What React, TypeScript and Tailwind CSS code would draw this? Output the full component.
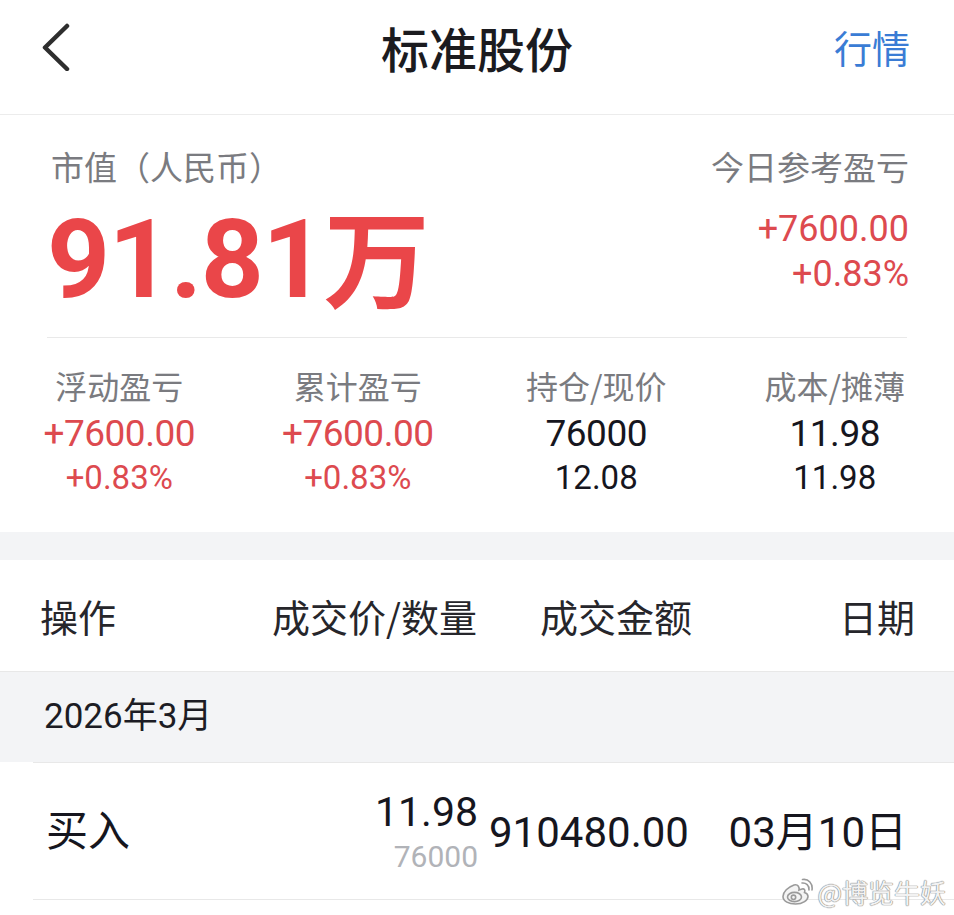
import React from "react";

const NUM = "font-['Roboto','Noto_Sans_CJK_SC',sans-serif]";
const CJK = "font-['Noto_Sans_CJK_SC',sans-serif]";

function Chevron() {
  return (
    <svg width="30" height="48" viewBox="0 0 30 48" className="block">
      <polyline
        points="25,3 3,24.5 25,46"
        fill="none"
        stroke="#2e2e2e"
        strokeWidth="4.5"
        strokeLinecap="round"
        strokeLinejoin="round"
      />
    </svg>
  );
}

function WeiboLogo() {
  return (
    <svg width="32" height="28" viewBox="0 0 32 28" className="block">
      <g fill="none" stroke="#9a9a9a" strokeWidth="1.6">
        <path d="M13 7 C7 9 2 14 2 18.5 C2 23.5 8 26 14.5 26 C22 26 27 22 27 18.5 C27 16 25 15 23.5 14.5 C24.5 12 23.5 10.5 21 11 C19.5 11.3 18 12 18 12 C18.5 9.5 17.5 6 13 7 Z" fill="#f4f4f4" />
        <ellipse cx="13.5" cy="19" rx="7" ry="4.6" />
        <circle cx="12.5" cy="19.3" r="2.2" />
        <path d="M21 5 C25 4.5 28.5 7.5 28 12" strokeLinecap="round" />
        <path d="M21.5 1.5 C27.5 0.5 32 5.5 31 12" strokeLinecap="round" />
      </g>
    </svg>
  );
}

function StatCol({
  label,
  v1,
  v2,
  red,
}: {
  label: string;
  v1: string;
  v2: string;
  red?: boolean;
}) {
  const color = red ? "text-[#dd4a4f]" : "text-[#16161e]";
  return (
    <div className="flex-1 flex flex-col items-center">
      <div className={`${CJK} text-[32px] leading-[40px] text-[#7a7b80]`}>{label}</div>
      <div className={`${NUM} mt-[6px] text-[37px] leading-[46px] tracking-[-0.5px] ${color}`}>{v1}</div>
      <div className={`${NUM} text-[33px] leading-[42px] ${color}`}>{v2}</div>
    </div>
  );
}

export default function App() {
  return (
    <div className="relative w-full h-[915px] bg-white overflow-hidden">
      {/* Header */}
      <div className="h-[115px] border-b border-[#ececec]">
        <div className="h-[94px] grid grid-cols-[1fr_auto_1fr] items-center">
          <div className="pl-[42px]">
            <Chevron />
          </div>
          <div className={`${CJK} text-[48px] leading-[56px] font-medium text-[#1b1b1f]`}>标准股份</div>
          <div className="flex justify-end pr-[44px]">
            <span className={`${CJK} text-[38px] leading-[44px] text-[#3a7cd5]`}>行情</span>
          </div>
        </div>
      </div>

      {/* Summary */}
      <div className="pt-[31px]">
        <div className="pl-[51px] pr-[45px] flex justify-between">
          <div className={`${CJK} text-[33px] leading-[40px] text-[#7a7b80]`}>市值（人民币）</div>
          <div className={`${CJK} text-[33px] leading-[40px] text-[#7a7b80]`}>今日参考盈亏</div>
        </div>
        <div className="mt-[18px] pl-[47px] pr-[45px] flex justify-between items-start">
          <div className={`${NUM} text-[110px] leading-[112px] font-bold text-[#ea4649] flex items-end`}>
            <span className="tracking-[-1.5px]">91.81</span>
            <span className={`${CJK} text-[106px] leading-[112px] font-bold -translate-y-[6px]`}>万</span>
          </div>
          <div className={`${NUM} pt-[3px] text-right text-[36px] leading-[45px] text-[#dd4a4f]`}>
            <div>+7600.00</div>
            <div>+0.83%</div>
          </div>
        </div>
        <div className="mt-[21px] mx-[47px] h-px bg-[#e9e9e9]" />
      </div>

      {/* Stats */}
      <div className="pt-[27px] pb-[33px] flex">
        <StatCol label="浮动盈亏" v1="+7600.00" v2="+0.83%" red />
        <StatCol label="累计盈亏" v1="+7600.00" v2="+0.83%" red />
        <StatCol label="持仓/现价" v1="76000" v2="12.08" />
        <StatCol label="成本/摊薄" v1="11.98" v2="11.98" />
      </div>

      <div className="h-[28px] bg-[#f3f4f6]" />

      {/* Table header */}
      <div
        className={`${CJK} h-[112px] border-b border-[#e8e8e8] flex items-center pl-[40px] pr-[39px] text-[38px] leading-[46px] text-[#26262b]`}
      >
        <div className="w-[200px]">操作</div>
        <div className="w-[237px] text-right">成交价/数量</div>
        <div className="ml-[63px]">成交金额</div>
        <div className="ml-auto">日期</div>
      </div>

      {/* Month band */}
      <div className="h-[90px] bg-[#f3f4f6] flex items-center pl-[44px]">
        <span className={`${NUM} text-[35px] leading-[42px] text-[#1c1c24]`}>2026年3月</span>
      </div>

      {/* Trade row */}
      <div className="ml-[33px] h-[138px] border-t border-b border-[#e8e8e8] flex items-center pl-[13px] pr-[47px]">
        <div className={`${CJK} w-[200px] text-[42px] leading-[48px] text-[#16161e] -mt-[6px]`}>买入</div>
        <div className="w-[232px] flex flex-col items-end gap-[8px]">
          <div className={`${NUM} text-[41px] leading-[44px] text-[#16161e]`}>11.98</div>
          <div className={`${NUM} text-[30px] leading-[30px] text-[#b1b3b8]`}>76000</div>
        </div>
        <div className={`${NUM} ml-[11px] mt-[4px] text-[42px] leading-[48px] text-[#16161e]`}>910480.00</div>
        <div className={`${NUM} ml-auto mt-[4px] text-[42px] leading-[48px] text-[#16161e]`}>03月10日</div>
      </div>

      {/* Watermark */}
      <div className="absolute right-[8px] bottom-[8px] flex items-center gap-[4px]">
        <WeiboLogo />
        <span
          className={`${CJK} text-[26px] leading-[30px] text-[#f2f2f2] [text-shadow:0_0_1px_#8a8a8a,0_0_1px_#8a8a8a,0_0_1px_#8a8a8a]`}
        >
          @博览牛妖
        </span>
      </div>
    </div>
  );
}
